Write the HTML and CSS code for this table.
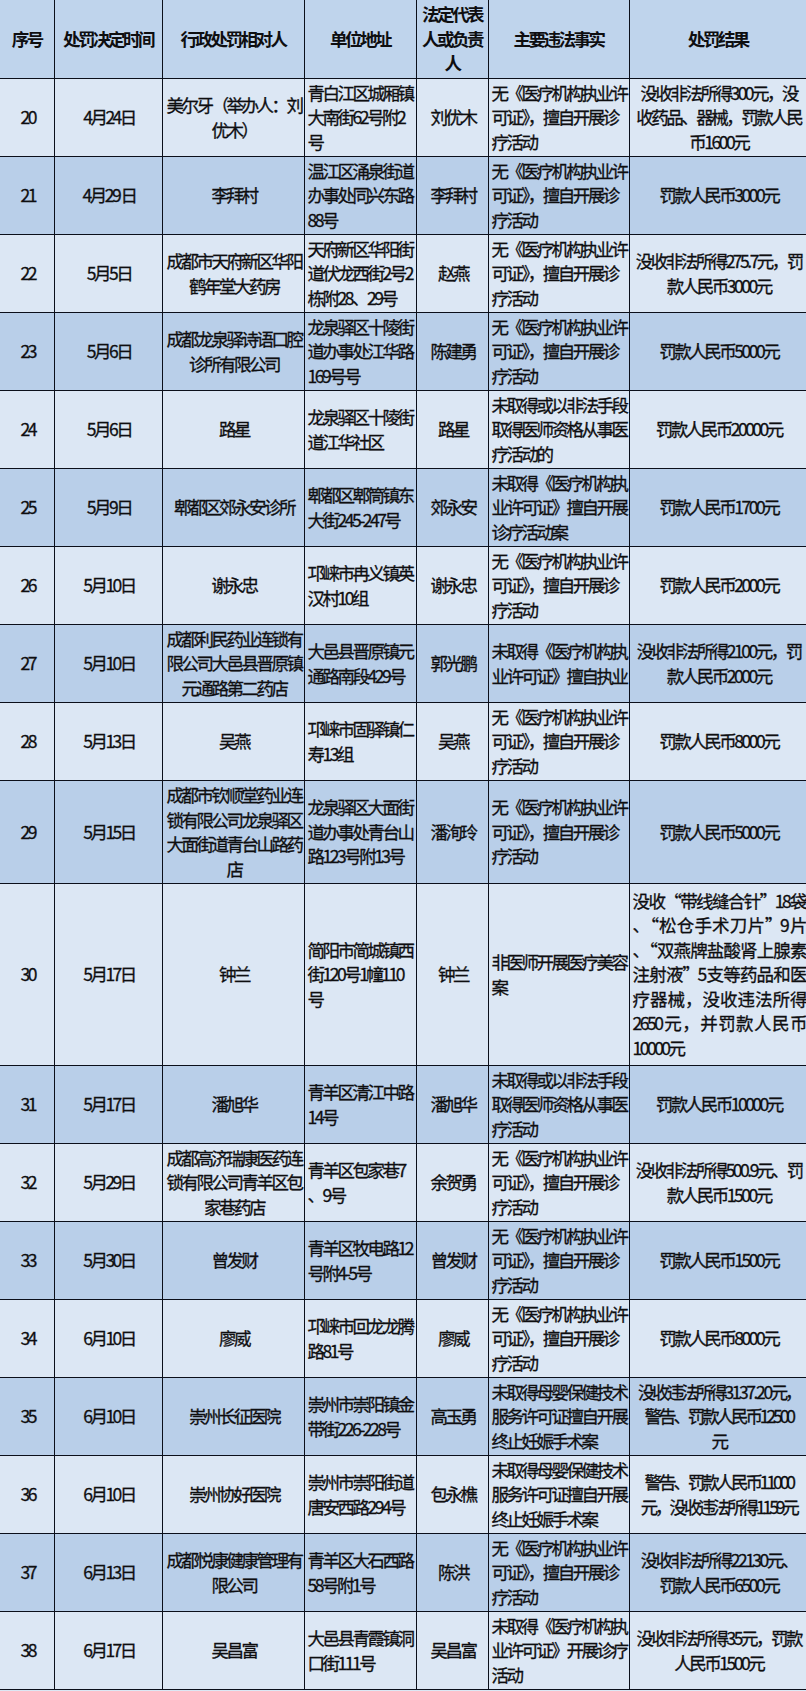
FILE: index.html
```html
<!DOCTYPE html>
<html lang="zh-CN">
<head>
<meta charset="utf-8">
<title>行政处罚信息</title>
<link rel="stylesheet" href="styles.css">
</head>
<body>
<table class="sheet">
  <colgroup>
    <col class="w-no"><col class="w-date"><col class="w-party"><col class="w-addr"><col class="w-rep"><col class="w-fact"><col class="w-result">
  </colgroup>
  <thead>
    <tr>
      <th>序号</th><th>处罚决定时间</th><th>行政处罚相对人</th><th>单位地址</th><th>法定代表人或负责人</th><th>主要违法事实</th><th>处罚结果</th>
    </tr>
  </thead>
  <tbody>
    <tr class="row-a">
      <td class="c">20</td><td class="c">4月24日</td><td class="c">美尔牙（举办人：刘<br>优木）</td><td class="l">青白江区城厢镇<br>大南街62号附2<br>号</td><td class="c">刘优木</td><td class="l">无《医疗机构执业许<br>可证》，擅自开展诊<br>疗活动</td><td class="c">没收非法所得300元，没<br>收药品、器械，罚款人民<br>币1600元</td>
    </tr>
    <tr class="row-b">
      <td class="c">21</td><td class="c">4月29 日</td><td class="c">李拜村</td><td class="l">温江区涌泉街道<br>办事处同兴东路<br>88号</td><td class="c">李拜村</td><td class="l">无《医疗机构执业许<br>可证》，擅自开展诊<br>疗活动</td><td class="c">罚款人民币3000元</td>
    </tr>
    <tr class="row-a">
      <td class="c">22</td><td class="c">5月5日</td><td class="c">成都市天府新区华阳<br>鹤年堂大药房</td><td class="l">天府新区华阳街<br>道伏龙西街2号2<br>栋附28、29号</td><td class="c">赵燕</td><td class="l">无《医疗机构执业许<br>可证》，擅自开展诊<br>疗活动</td><td class="c">没收非法所得275.7元，罚<br>款人民币3000元</td>
    </tr>
    <tr class="row-b">
      <td class="c">23</td><td class="c">5月6日</td><td class="c">成都龙泉驿诗语口腔<br>诊所有限公司</td><td class="l">龙泉驿区十陵街<br>道办事处江华路<br>169号号</td><td class="c">陈建勇</td><td class="l">无《医疗机构执业许<br>可证》，擅自开展诊<br>疗活动</td><td class="c">罚款人民币5000元</td>
    </tr>
    <tr class="row-a">
      <td class="c">24</td><td class="c">5月6日</td><td class="c">路星</td><td class="l">龙泉驿区十陵街<br>道江华社区</td><td class="c">路星</td><td class="l">未取得或以非法手段<br>取得医师资格从事医<br>疗活动的</td><td class="c">罚款人民币20000元</td>
    </tr>
    <tr class="row-b">
      <td class="c">25</td><td class="c">5月9日</td><td class="c">郫都区郊永安诊所</td><td class="l">郫都区郫筒镇东<br>大街245-247号</td><td class="c">郊永安</td><td class="l">未取得《医疗机构执<br>业许可证》擅自开展<br>诊疗活动案</td><td class="c">罚款人民币1700元</td>
    </tr>
    <tr class="row-a">
      <td class="c">26</td><td class="c">5月10日</td><td class="c">谢永忠</td><td class="l">邛崃市冉义镇英<br>汉村10组</td><td class="c">谢永忠</td><td class="l">无《医疗机构执业许<br>可证》，擅自开展诊<br>疗活动</td><td class="c">罚款人民币2000元</td>
    </tr>
    <tr class="row-b">
      <td class="c">27</td><td class="c">5月10日</td><td class="c">成都利民药业连锁有<br>限公司大邑县晋原镇<br>元通路第二药店</td><td class="l">大邑县晋原镇元<br>通路南段429号</td><td class="c">郭光鹏</td><td class="l">未取得《医疗机构执<br>业许可证》擅自执业</td><td class="c">没收非法所得2100元，罚<br>款人民币2000元</td>
    </tr>
    <tr class="row-a">
      <td class="c">28</td><td class="c">5月13日</td><td class="c">吴燕</td><td class="l">邛崃市固驿镇仁<br>寿13组</td><td class="c">吴燕</td><td class="l">无《医疗机构执业许<br>可证》，擅自开展诊<br>疗活动</td><td class="c">罚款人民币8000元</td>
    </tr>
    <tr class="row-b row-tall">
      <td class="c">29</td><td class="c">5月15日</td><td class="c">成都市钦顺堂药业连<br>锁有限公司龙泉驿区<br>大面街道青台山路药<br>店</td><td class="l">龙泉驿区大面街<br>道办事处青台山<br>路123号附13号</td><td class="c">潘洵玲</td><td class="l">无《医疗机构执业许<br>可证》，擅自开展诊<br>疗活动</td><td class="c">罚款人民币5000元</td>
    </tr>
    <tr class="row-a row-xtall">
      <td class="c">30</td><td class="c">5月17日</td><td class="c">钟兰</td><td class="l">简阳市简城镇西<br>街120号1幢110<br>号</td><td class="c">钟兰</td><td class="l">非医师开展医疗美容<br>案</td><td class="l just"><span class="ln">没收“带线缝合针”18袋</span><span class="ln">、“松仓手术刀片”9片</span><span class="ln">、“双燕牌盐酸肾上腺素</span><span class="ln">注射液”5支等药品和医</span><span class="ln">疗器械，没收违法所得</span><span class="ln">2650元，并罚款人民币</span><span class="ln last">10000元</span></td>
    </tr>
    <tr class="row-b">
      <td class="c">31</td><td class="c">5月17日</td><td class="c">潘旭华</td><td class="l">青羊区清江中路<br>14号</td><td class="c">潘旭华</td><td class="l">未取得或以非法手段<br>取得医师资格从事医<br>疗活动</td><td class="c">罚款人民币10000元</td>
    </tr>
    <tr class="row-a">
      <td class="c">32</td><td class="c">5月29日</td><td class="c">成都高济瑞康医药连<br>锁有限公司青羊区包<br>家巷药店</td><td class="l">青羊区包家巷7<br>、9号</td><td class="c">余贺勇</td><td class="l">无《医疗机构执业许<br>可证》，擅自开展诊<br>疗活动</td><td class="c">没收非法所得500.9元、罚<br>款人民币1500元</td>
    </tr>
    <tr class="row-b">
      <td class="c">33</td><td class="c">5月30日</td><td class="c">曾发财</td><td class="l">青羊区牧电路12<br>号附4-5号</td><td class="c">曾发财</td><td class="l">无《医疗机构执业许<br>可证》，擅自开展诊<br>疗活动</td><td class="c">罚款人民币1500元</td>
    </tr>
    <tr class="row-a">
      <td class="c">34</td><td class="c">6月10日</td><td class="c">廖威</td><td class="l">邛崃市回龙龙腾<br>路81号</td><td class="c">廖威</td><td class="l">无《医疗机构执业许<br>可证》，擅自开展诊<br>疗活动</td><td class="c">罚款人民币8000元</td>
    </tr>
    <tr class="row-b">
      <td class="c">35</td><td class="c">6月10日</td><td class="c">崇州长征医院</td><td class="l">崇州市崇阳镇金<br>带街226-228号</td><td class="c">高玉勇</td><td class="l">未取得母婴保健技术<br>服务许可证擅自开展<br>终止妊娠手术案</td><td class="c tight">没收违法所得<span class="num">3137.20</span>元，<br>警告、罚款人民币12500<br>元</td>
    </tr>
    <tr class="row-a">
      <td class="c">36</td><td class="c">6月10日</td><td class="c">崇州协好医院</td><td class="l">崇州市崇阳街道<br>唐安西路294号</td><td class="c">包永樵</td><td class="l">未取得母婴保健技术<br>服务许可证擅自开展<br>终止妊娠手术案</td><td class="c tight">警告、罚款人民币11000<br>元，没收违法所得1159元</td>
    </tr>
    <tr class="row-b">
      <td class="c">37</td><td class="c">6月13日</td><td class="c">成都悦康健康管理有<br>限公司</td><td class="l">青羊区大石西路<br>58号附1号</td><td class="c">陈洪</td><td class="l">无《医疗机构执业许<br>可证》，擅自开展诊<br>疗活动</td><td class="c">没收非法所得22130元、<br>罚款人民币6500元</td>
    </tr>
    <tr class="row-a">
      <td class="c">38</td><td class="c">6月17日</td><td class="c">吴昌富</td><td class="l">大邑县青霞镇洞<br>口街111号</td><td class="c">吴昌富</td><td class="l">未取得《医疗机构执<br>业许可证》开展诊疗<br>活动</td><td class="c">没收非法所得35元，罚款<br>人民币1500元</td>
    </tr>
  </tbody>
</table>
</body>
</html>
```

FILE: styles.css
```css
html, body {
  margin: 0;
  padding: 0;
  background: #dce7f4;
}

body {
  font-family: "Noto Sans CJK SC", "Noto Sans", sans-serif;
  color: #0e0e10;
}

.sheet {
  width: 806px;
  border-collapse: collapse;
  table-layout: fixed;
  font-size: 17.5px;
  line-height: 24.5px;
  letter-spacing: -2.5px;
  -webkit-text-stroke: 0.3px #0e0e10;
}

.w-no { width: 54px; }
.w-date { width: 108px; }
.w-party { width: 142px; }
.w-addr { width: 112px; }
.w-rep { width: 72px; }
.w-fact { width: 141px; }
.w-result { width: 177px; }

.sheet th,
.sheet td {
  border: 1px solid #0b0f1a;
  padding: 0 1px 0 3px;
  vertical-align: middle;
  white-space: nowrap;
}

.sheet tr > :first-child { border-left: none; }
.sheet tr > :last-child { border-right: none; }

.sheet thead th {
  border-top: none;
  height: 78px;
  background: #bfd4ec;
  font-weight: 700;
  text-align: center;
  white-space: normal;
  padding: 0 2px;
  -webkit-text-stroke: 0;
}

.sheet tbody tr { height: 78px; }
.sheet tbody tr.row-tall { height: 103px; }
.sheet tbody tr.row-xtall { height: 182px; }

.row-a { background: #dce7f4; }
.row-b { background: #b9cfe9; }

.c { text-align: center; }
.l { text-align: left; }

.tight { letter-spacing: -3.1px; }
.tight .num { letter-spacing: -2.4px; }

.just { white-space: normal; }
.just .ln {
  display: block;
  text-align: justify;
  text-align-last: justify;
}
.just .ln.last { text-align-last: left; }
```
